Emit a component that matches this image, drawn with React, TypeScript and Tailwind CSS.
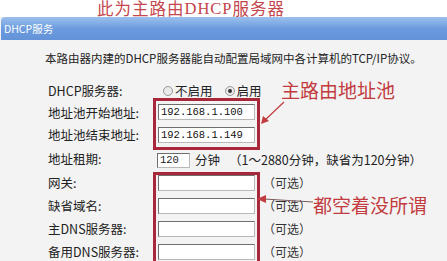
import React from 'react';

const cjk = { fontFamily: '"Noto Sans CJK SC", "Noto Sans", sans-serif' };
const mono = { fontFamily: '"Liberation Mono", "Noto Sans CJK SC", monospace' };

const Field = ({ value = '', w = 'w-[97px]' }: { value?: string; w?: string }) => (
  <div
    className={`${w} h-[16px] bg-white border border-[#6f6f6f] border-b-[#b8b8b8] border-r-[#b8b8b8] flex items-center pl-[2px] text-[10.5px] text-[#111] leading-none`}
    style={mono}
  >
    {value}
  </div>
);

const Radio = ({ checked, label }: { checked?: boolean; label: string }) => (
  <div className="flex items-center gap-[2px]">
    <span className="w-[10px] h-[10px] rounded-full border border-[#9a9a9a] bg-[#eaeaea] flex items-center justify-center">
      {checked && <span className="w-[4px] h-[4px] rounded-full bg-[#333]" />}
    </span>
    <span>{label}</span>
  </div>
);

export default function App() {
  const labels: [string, string][] = [
    ['DHCP服务器:', 'h-[22px]'],
    ['地址池开始地址:', 'h-[22px]'],
    ['地址池结束地址:', 'h-[23px]'],
    ['地址租期:', 'h-[25px]'],
    ['网关:', 'h-[23px]'],
    ['缺省域名:', 'h-[23px]'],
    ['主DNS服务器:', 'h-[23px]'],
    ['备用DNS服务器:', 'h-[23px]'],
  ];

  return (
    <div className="relative w-[447px] h-[261px] overflow-hidden bg-[#f3f3f3] text-[#222]" style={cjk}>
      {/* header caption */}
      <div className="h-[17px] bg-white pl-[97px] flex items-center text-[16.5px] leading-[17px] tracking-[1px] text-[#c4454c] whitespace-nowrap">
        此为主路由<span style={{ fontFamily: '"Liberation Serif", serif' }}>DHCP</span>服务器
      </div>

      {/* blue title bar */}
      <div className="ml-[1px] h-[23px] rounded-tl-[4px] bg-gradient-to-b from-[#9cc0ec] via-[#6c9cdf] to-[#6392d8] flex items-center pl-[3px] text-[10.5px] text-white">
        DHCP服务
      </div>

      <div className="pl-[45px] pt-[11px] h-[40px] text-[11.5px] leading-[14px] whitespace-nowrap">
        本路由器内建的DHCP服务器能自动配置局域网中各计算机的TCP/IP协议。
      </div>

      <div className="flex text-[12.5px]">
        <div className="w-[153px] shrink-0 pl-[48px] flex flex-col">
          {labels.map(([t, h]) => (
            <div key={t} className={`${h} flex items-center whitespace-nowrap`}>
              {t}
            </div>
          ))}
        </div>

        <div className="flex flex-col">
          <div className="h-[18px] flex items-end gap-[12px] pl-[10px] leading-[14px]">
            <Radio label="不启用" />
            <Radio checked label="启用" />
          </div>

          <div className="w-[107px] border-[3px] border-[#a8283a] pt-[3px] pb-[4px] px-[2px] flex flex-col gap-[7px]">
            <Field value="192.168.1.100" />
            <Field value="192.168.1.149" />
          </div>

          <div className="flex items-center pt-[3px] pl-[4px] h-[18px] whitespace-nowrap">
            <div className="h-[15px] w-[33px] bg-white border border-[#6f6f6f] border-b-[#b8b8b8] border-r-[#b8b8b8] pl-[2px] text-[10.5px] leading-[13px]" style={mono}>
              120
            </div>
            <span className="ml-[5px]">分钟</span>
            <span className="ml-[9px]">（1～2880分钟，缺省为120分钟）</span>
          </div>

          <div className="flex items-start mt-[4px]">
            <div className="w-[107px] h-[100px] border-[3px] border-b-0 border-[#a8283a] px-[2px] flex flex-col gap-[7px]">
              <Field />
              <Field />
              <Field />
              <Field />
            </div>
            <div className="flex flex-col gap-[7px] pt-[3px] ml-[3px]">
              {[0, 1, 2, 3].map((i) => (
                <div key={i} className="h-[16px] flex items-center text-[12px] text-[#333]">
                  （可选）
                </div>
              ))}
            </div>
          </div>
        </div>
      </div>

      {/* annotations */}
      <div className="absolute left-[281px] top-[80px] text-[19px] leading-[20px] text-[#c23b3f] whitespace-nowrap">
        主路由地址池
      </div>
      <div className="absolute left-[313px] top-[195px] text-[19px] leading-[20px] text-[#c23b3f] whitespace-nowrap">
        都空着没所谓
      </div>

      <svg className="absolute left-0 top-0 pointer-events-none" width="447" height="261">
        <line x1="284" y1="102" x2="264" y2="121" stroke="#c23b3f" strokeWidth="1.2" />
        <polygon points="261,124 263,116 269,121" fill="#c23b3f" />
        <line x1="313" y1="202" x2="264" y2="199" stroke="#7a5a5a" strokeWidth="1" />
        <polygon points="257,199 266,195 266,203" fill="#c23b3f" />
      </svg>
    </div>
  );
}
